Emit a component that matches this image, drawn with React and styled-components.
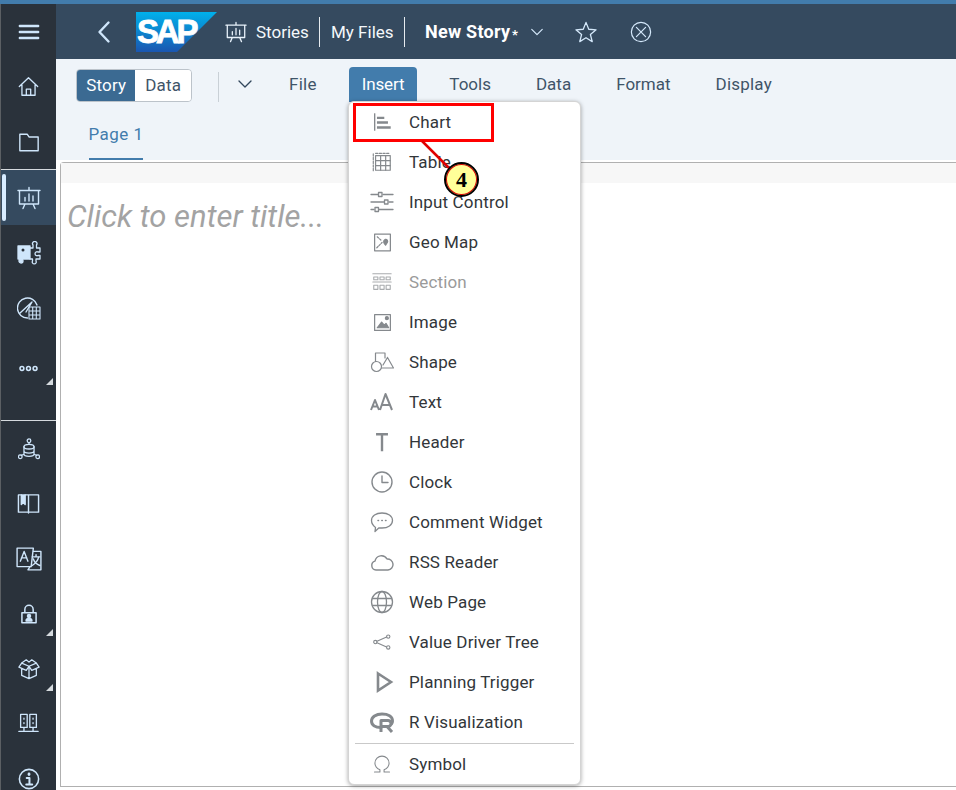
import React from "react";
import styled, { createGlobalStyle } from "styled-components";

const Global = createGlobalStyle`
  html, body { margin: 0; padding: 0; width: 956px; height: 790px; overflow: hidden; background: #fff; }
  * { box-sizing: border-box; }
  body { font-family: Roboto, "Open Sans", Arial, sans-serif; }
`;

const Page = styled.div`
  position: relative; width: 956px; height: 790px; display: flex; flex-direction: column; overflow: hidden;
`;
const TopStrip = styled.div`height: 4px; background: #427cac; flex: none;`;
const Body = styled.div`flex: 1; display: flex; min-height: 0;`;

const Sidebar = styled.nav`
  width: 56px; flex: none; background: #2a323b; border-left: 1px solid #5b5f63; display: flex; flex-direction: column;
  color: #cfe6fb; overflow: hidden;
`;
const Burger = styled.div`height: 55px; flex: none; display: flex; align-items: center; justify-content: center;`;
const Group = styled.div`display: flex; flex: none; flex-direction: column; border-top: ${p => p.$light ? "1px solid #d5dade" : "none"};`;
const SideItem = styled.div`
  position: relative; height: ${p => p.$h || 55}px; flex: none; display: flex; align-items: center; justify-content: center;
  padding-bottom: ${p => p.$pb || 0}px;
  background: ${p => p.$active ? "#354a5f" : "transparent"};
  &::before { content: ""; display: ${p => p.$active ? "block" : "none"}; position: absolute; left: 1px; top: 4px; bottom: 4px; width: 4px; border-radius: 2px; background: #d8ecff; }
  &::after { content: ""; display: ${p => p.$more ? "block" : "none"}; position: absolute; right: 3px; bottom: ${p => p.$bottom ?? 5}px; border-style: solid; border-width: 0 0 7px 7px; border-color: transparent transparent #d5dade transparent; }
`;

const Main = styled.div`flex: 1; display: flex; flex-direction: column; min-width: 0;`;
const Header = styled.header`
  height: 55px; flex: none; background: #354a5f; display: flex; align-items: center; color: #fff; font-size: 17px; padding-left: 37px;
`;
const Back = styled.div`width: 24px; display: flex; margin-right: 19px; color: #cfe6fb;`;
const Logo = styled.svg`width: 81px; height: 40px; margin-right: 8px; flex: none;`;
const HeadIcon = styled.div`display: flex; width: 24px; margin-right: 7px; color: #e8f2fb;`;
const Crumb = styled.span`color: #f4f8fb; width: ${p => p.$w}px; white-space: nowrap;`;
const Sep = styled.div`width: 1px; height: 30px; background: #e6ebef; margin: 0 ${p => p.$r}px 0 ${p => p.$l}px;`;
const StoryName = styled.span`font-weight: 700; font-size: 18px; letter-spacing: .25px; color: #fff; width: 87px; white-space: nowrap;`;
const Star = styled.span`font-size: 13px; font-weight: 700; width: 10px; margin-left: 0; padding-top: 6px; align-self: center;`;
const HeadBtn = styled.div`display: flex; margin-left: ${p => p.$ml}px; color: #d5e9fb;`;

const Toolbar = styled.div`
  height: 101px; flex: none; background: #eff4f9; display: flex; flex-direction: column; padding-left: 20px;
`;
const ToolRow = styled.div`height: 43px; margin-top: 8px; display: flex; align-items: flex-start;`;
const Segment = styled.div`
  margin-top: 2px; display: flex; flex: none; height: 33px; width: 116px; border: 1px solid #bcc3ca; border-radius: 4px; overflow: hidden; font-size: 17px; letter-spacing: .2px;
`;
const SegBtn = styled.div`
  width: ${p => p.$w}px; display: flex; align-items: center; justify-content: center; padding-bottom: 1px;
  background: ${p => p.$on ? "#3b6a92" : "#fff"}; color: ${p => p.$on ? "#fff" : "#3f5468"};
`;
const VLine = styled.div`width: 1px; height: 30px; margin: 5px 18px 0 26px; flex: none; background: #c9d0d6;`;
const Caret = styled.div`display: flex; width: 16px; margin-top: 9px; margin-right: 23px; color: #32475c;`;
const MenuBar = styled.div`display: flex; gap: 19px;`;
const MenuBtn = styled.div`
  height: 35px; padding: 0 13px 1px; display: flex; align-items: center; font-size: 17px; border-radius: 4px 4px 0 0; white-space: nowrap;
  letter-spacing: ${p => p.$ls || 0}px;
  background: ${p => p.$on ? "#427cac" : "transparent"}; color: ${p => p.$on ? "#fff" : "#3f5468"};
`;
const Tabs = styled.div`margin-left: 13px; margin-top: 7px; height: 43px; width: 54px;`;
const Tab = styled.div`
  height: 43px; color: #427cac; font-size: 17px; letter-spacing: .5px; display: flex; align-items: center; justify-content: center; padding-bottom: 7px; white-space: nowrap;
  border-bottom: 2px solid #427cac;
`;
const Canvas = styled.div`
  flex: 1; margin: 2px 0 3px 4px; border: 1px solid #b0b0b0; border-right: none; border-radius: 4px 0 0 0; background: #fff; display: flex; flex-direction: column;
`;
const CanvasHead = styled.div`height: 20px; background: #f7f7f7; flex: none;`;
const Title = styled.div`
  font-size: 31px; font-style: italic; color: #a3a3a3; margin: 16px 0 0 6px; line-height: 36px;
`;

const Menu = styled.div`
  position: absolute; left: 348px; top: 101px; width: 233px; height: 684px; background: #fff; border-radius: 6px;
  border: 1px solid #d4d4d4; box-shadow: 0 1px 4px rgba(0,0,0,.35); display: flex; flex-direction: column; padding-left: 1px;
`;
const Item = styled.div`
  height: 40px; flex: none; display: flex; align-items: center; font-size: 17px; letter-spacing: .15px; color: ${p => p.$off ? "#9a9a9a" : "#32363a"};
`;
const ItemIcon = styled.div`
  width: 24px; height: 24px; margin: 0 15px 0 20px; flex: none; display: flex; align-items: center; justify-content: center; color: #85898d; opacity: ${p => p.$off ? .7 : 1};
`;
const MenuRule = styled.div`height: 1px; background: #c9c9c9; margin: 1px 6px 0 5px; flex: none;`;

const Callout = styled.svg`position: absolute; left: 340px; top: 95px; width: 160px; height: 110px; pointer-events: none;`;
const Badge = styled.div`
  position: absolute; left: 444px; top: 162px; width: 35px; height: 35px; border-radius: 50%; background: #ffff99;
  border: 2px solid #000; box-shadow: 0 0 0 1px #e00000 inset;
  display: flex; align-items: center; justify-content: center; font: 700 22px "Liberation Serif", serif; color: #000;
`;

const S = ({ size = 24, sw = 1.4, children, fill = "none" }) => (
  <svg width={size} height={size} viewBox="0 0 24 24" fill={fill} stroke="currentColor" strokeWidth={sw} strokeLinecap="round" strokeLinejoin="round">{children}</svg>
);

const icons = {
  burger: <S sw={2.600}><path d="M2 5.500h20M2 12h20M2 18.500h20"/></S>,
  home: <S sw={1.5}><path d="M1.500 12 12 2l10.500 10M4.500 10v12h15V10M9.500 22v-7h5v7"/></S>,
  folder: <S sw={1.5}><path d="M2 3.500h8l2 3h10V21.500H2z"/></S>,
  stories: <S sw={1.4}><path d="M1 4.500h22M2.500 4.500V18h19V4.500M12 1.500v3M8 18l-2 4.500M16 18l2 4.500"/><path d="M8 15v-3.500M12 15V8M16 15v-5"/></S>,
  puzzle: <S sw={1.300}><path fill="currentColor" d="M1 5h12v13H1z"/><circle cx="4" cy="20" r="2" fill="currentColor"/><path d="M13 7h3V4a2.200 2.200 0 1 1 3.500 0v3H23v4h-2a2 2 0 1 0 0 3.500h2V18h-4v2a2 2 0 1 1-3.500 0v-2H13"/><circle cx="6" cy="9" r="1.500" fill="#2a323b" stroke="none"/></S>,
  gauge: <S sw={1.400}><path d="M10.500 22A10 10 0 1 1 20 9"/><path d="M2.500 17.500 15 6l-6 10"/><path d="M12 11h11v12H12zM15.700 11v12M19.300 11v12M12 15h11M12 19h11" strokeWidth="1.100"/></S>,
  dots: <S sw={1.800}><circle cx="4.500" cy="12" r="2.200"/><circle cx="12" cy="12" r="2.200"/><circle cx="19.500" cy="12" r="2.200"/></S>,
  network: <S sw={1.400}><circle cx="12" cy="3" r="2"/><path d="M12 5v2"/><ellipse cx="12" cy="9.500" rx="5.500" ry="2.500"/><path d="M6.500 9.500v8c0 1.500 2.500 2.500 5.500 2.500s5.500-1 5.500-2.500v-8M6.500 14c0 1.500 2.500 2.500 5.500 2.500s5.500-1 5.500-2.500M6 18l-2.500 1M18 18l2.500 1"/><circle cx="2.500" cy="20.500" r="2"/><circle cx="21.500" cy="20.500" r="2"/></S>,
  book: <S sw={1.500}><path d="M1.500 3h21v18h-21zM12 3v19"/><path d="M4.500 3v10l2-2 2 2V3" fill="currentColor"/></S>,
  lang: <S sw={1.300}><path d="M1 2h15l-2 17H1zM16 5h7v17H11l2-3"/><path d="M4 14l3.500-9 3.500 9M5 11h5M15 10h7M18.500 8v2M21 10c-1 4-3 6-6 8M16 12c1 3 3 5 6 6"/></S>,
  lock: <S sw={1.800}><path d="M3.500 10.500h17v12h-17zM7 10.500V6.500a5 5 0 0 1 10 0v4"/><circle cx="12" cy="14.500" r="1.800" fill="currentColor"/><path d="M8.500 20.500c0-2 1.500-3 3.500-3s3.500 1 3.500 3z" fill="currentColor"/></S>,
  box: <S sw={1.400}><path d="M12 9 4 5.500 9 2l3 2.500L15 2l5 3.500zM4 5.500 1 10l8 3.500L12 9l3 4.500 8-3.500-3-4.500M4 12v7l8 3.500 8-3.500v-7M12 10v12.500"/></S>,
  servers: <S sw={1.500}><path d="M3 1.500h7.500v15H3zM13.500 1.500H21v15h-7.500zM6.800 16.500V21M17.200 16.500V21M1 21h22"/><path d="M6.800 6v1M6.800 11v1M17.200 6v1M17.200 11v1"/></S>,
  info: <S sw={1.700}><circle cx="12" cy="12" r="10.500"/><path d="M12 6.500v.6" strokeWidth="3"/><path d="M9.500 11H12.500v7M9 18h6.500" strokeWidth="2.200"/></S>,
  chevL: <S sw={2.400}><path d="M15.500 2.500 6.500 12l9 9.500"/></S>,
  chevD: <S sw={2}><path d="M3 7.500l9 9 9-9"/></S>,
  star: <S sw={1.400}><path d="M12 1.500l3 7.500 8 .6-6.200 5.100 2 7.800L12 18.300l-6.800 4.200 2-7.800L1 9.600 9 9z"/></S>,
  close: <S sw={1.300}><circle cx="12" cy="12" r="10.500"/><path d="M7 7l10 10M17 7 7 17"/></S>,
  chart: <S sw={1.500}><path d="M4 2.500v19" strokeLinecap="butt"/><path d="M6.500 7.500h8M6.500 12.500h12M6.500 18h15" strokeWidth="2.600" strokeLinecap="butt"/></S>,
  table: <S sw={1.300}><path d="M5 5h16v16H5z"/><path d="M10.500 5v16M16 5v16M5 10.500h16M5 16h16"/><path d="M2.500 3v18.500M5 2.500h16" strokeDasharray="2.500 1.500"/></S>,
  input: <S sw={1.300}><path d="M1 4.500h7M13 4.500h10M1 12h13M19 12h4M1 19.500h3M9 19.500h14"/><path d="M8.500 2.500h3.500v4H8.500zM14.500 10H18v4h-3.500zM5 17.500h3.500v4H5z"/></S>,
  geo: <S sw={1.400}><path d="M3 2.500h18v19H3z"/><path d="M6 5.500l4.500 4M5.500 18l3-3 3-3" strokeDasharray="2 1.500"/><path d="M15.500 15c-2.500-2.500-3-5-.5-6.500 2.500-.5 3.500 2 2.500 3.500z" fill="currentColor"/></S>,
  section: <S sw={1.200}><path d="M2 3h20M2 12h20M3 6.500h4.500v3H3zM9.800 6.500h4.500v3H9.800zM16.500 6.500H21v3h-4.500zM3 15.500h4.500v4.500H3zM9.800 15.500h4.500v4.500H9.800zM16.500 15.500H21v4.500h-4.500z"/></S>,
  image: <S sw={1.400}><path d="M3 3h18v18H3z"/><path d="M6 18l5-6.500 3 3.500 2-2 3 5z" fill="currentColor"/><circle cx="17" cy="7" r="1.700" fill="currentColor"/></S>,
  shape: <S sw={1.200}><circle cx="6.500" cy="16.500" r="5"/><path d="M5.500 11.500V3H15v5M17.500 7.500 23.500 18H11.500M17.500 7.500 13 15"/></S>,
  text: <S sw={2}><path d="M1 20l4-10 4 10M2.500 16.500h5M10 20 15.500 4 22 20M12 15h8" strokeLinecap="butt"/></S>,
  header: <S sw={2.600}><path d="M5.500 3.500h13M12 3.500V22" strokeLinecap="butt"/></S>,
  clock: <S sw={1.400}><circle cx="12" cy="12" r="10"/><path d="M12 6v6.500h6"/></S>,
  comment: <S sw={1.300}><path d="M12 3c6 0 10.500 3 10.500 7.500S18 18 12 18c-1 0-2 0-3-.2L5 21.500l.5-4C3 15.500 1.500 13 1.500 10.500 1.500 6 6 3 12 3z"/><path d="M8 10.500h.5M11.800 10.500h.5M15.500 10.500h.5" strokeWidth="1.500"/></S>,
  cloud: <S sw={1.400}><path d="M6 20a4.500 4.500 0 0 1-1-8.800A6.500 6.500 0 0 1 17 9a5.500 5.500 0 0 1 1 11z"/></S>,
  web: <S sw={1.300}><circle cx="12" cy="12" r="10.500"/><ellipse cx="12" cy="12" rx="4.500" ry="10.500"/><path d="M2.500 8.500h19M2.500 15.500h19"/></S>,
  tree: <S sw={1.300}><circle cx="4" cy="12" r="2"/><circle cx="19.500" cy="5.500" r="2"/><circle cx="19.500" cy="18.500" r="2"/><path d="M6 11 17.500 6M6 13 17.500 18"/></S>,
  play: <S sw={2.600}><path d="M8 3.500 21 12 8 20.500z" strokeLinejoin="miter"/></S>,
  r: <S sw={3}><path d="M11 17.500C5 17.500 1.500 15 1.500 11S6 4 12 4s10.500 2.500 10.500 7c0 1-.3 2-1 3"/><path d="M11 22V10.500h7a3 3 0 0 1 0 6h-7M17 16.500l5 5.500" strokeLinecap="butt"/></S>,
  omega: <S sw={1.300}><path d="M3 21.500h6.500V19C5.500 17 3.500 14 3.500 11a8.500 8.500 0 0 1 17 0c0 3-2 6-6 8v2.500H21"/></S>,
};

const sizeOf = { burger: 22, chart: 22, table: 22, input: 24, geo: 21, section: 22, image: 21, shape: 26, text: 24, header: 22, clock: 24, comment: 24, cloud: 24, web: 24, tree: 20, play: 24, r: 26, omega: 20, home: 21, folder: 22, stories: 24, puzzle: 24, gauge: 24, dots: 21, network: 22, book: 23, lang: 26, lock: 20, box: 22, servers: 21, info: 22, chevL: 24 };
const Ico = ({ n, size }) => React.cloneElement(icons[n], { size: size || sizeOf[n] || 22 });

const menu = [
  ["chart", "Chart"], ["table", "Table"], ["input", "Input Control"], ["geo", "Geo Map"], ["section", "Section", true],
  ["image", "Image"], ["shape", "Shape"], ["text", "Text"], ["header", "Header"], ["clock", "Clock"],
  ["comment", "Comment Widget"], ["cloud", "RSS Reader"], ["web", "Web Page"], ["tree", "Value Driver Tree"],
  ["play", "Planning Trigger"], ["r", "R Visualization"],
];

export default function App() {
  return (
    <Page>
      <Global />
      <TopStrip />
      <Body>
        <Sidebar>
          <Burger><Ico n="burger" /></Burger>
          <Group>
            <SideItem><Ico n="home" /></SideItem>
            <SideItem><Ico n="folder" /></SideItem>
          </Group>
          <Group $light>
            <SideItem $active><Ico n="stories" /></SideItem>
            <SideItem><Ico n="puzzle" /></SideItem>
            <SideItem><Ico n="gauge" /></SideItem>
            <SideItem $more $h={85} $pb={19} $bottom={35}><Ico n="dots" /></SideItem>
          </Group>
          <Group $light>
            <SideItem><Ico n="network" /></SideItem>
            <SideItem><Ico n="book" /></SideItem>
            <SideItem><Ico n="lang" /></SideItem>
            <SideItem $more><Ico n="lock" /></SideItem>
            <SideItem $more><Ico n="box" /></SideItem>
            <SideItem><Ico n="servers" /></SideItem>
            <SideItem><Ico n="info" /></SideItem>
          </Group>
        </Sidebar>
        <Main>
          <Header>
            <Back><Ico n="chevL" /></Back>
            <Logo viewBox="0 0 81 40">
              <defs>
                <linearGradient id="sapg" x1="0" y1="0" x2="0" y2="1">
                  <stop offset="0" stopColor="#00b1eb" />
                  <stop offset="1" stopColor="#1a56b0" />
                </linearGradient>
              </defs>
              <polygon points="0,0 81,0 41,40 0,40" fill="url(#sapg)" />
              <text x="1" y="31" fontFamily="'Liberation Sans', Arial, sans-serif" fontWeight="700" fontSize="33" fill="#fff" stroke="#fff" strokeWidth=".8" letterSpacing="-3.2">SAP</text>
            </Logo>
            <HeadIcon><Ico n="stories" size={22} /></HeadIcon>
            <Crumb $w={54}>Stories</Crumb>
            <Sep $l={9} $r={11} />
            <Crumb $w={63}>My Files</Crumb>
            <Sep $l={10} $r={20} />
            <StoryName>New Story</StoryName>
            <Star>*</Star>
            <HeadBtn $ml={8}><Ico n="chevD" size={14} /></HeadBtn>
            <HeadBtn $ml={31}><Ico n="star" size={22} /></HeadBtn>
            <HeadBtn $ml={33}><Ico n="close" size={22} /></HeadBtn>
          </Header>
          <Toolbar>
            <ToolRow>
              <Segment>
                <SegBtn $on $w={59}>Story</SegBtn>
                <SegBtn $w={56}>Data</SegBtn>
              </Segment>
              <VLine />
              <Caret><Ico n="chevD" size={16} /></Caret>
              <MenuBar>
                <MenuBtn $ls={0.25}>File</MenuBtn>
                <MenuBtn $on $ls={-0.15}>Insert</MenuBtn>
                <MenuBtn>Tools</MenuBtn>
                <MenuBtn>Data</MenuBtn>
                <MenuBtn>Format</MenuBtn>
                <MenuBtn $ls={0.2}>Display</MenuBtn>
              </MenuBar>
            </ToolRow>
            <Tabs><Tab>Page 1</Tab></Tabs>
          </Toolbar>
          <Canvas>
            <CanvasHead />
            <Title>Click to enter title...</Title>
          </Canvas>
        </Main>
      </Body>
      <Menu>
        {menu.map(([ic, label, off]) => (
          <Item key={label} $off={off}>
            <ItemIcon $off={off}><Ico n={ic} /></ItemIcon>
            {label}
          </Item>
        ))}
        <MenuRule />
        <Item>
          <ItemIcon><Ico n="omega" /></ItemIcon>
          Symbol
        </Item>
      </Menu>
      <Callout viewBox="0 0 160 110">
        <rect x="14.500" y="9.500" width="138" height="36" fill="none" stroke="#ff0000" strokeWidth="3" />
        <line x1="82" y1="46" x2="112" y2="76" stroke="#e00000" strokeWidth="2.500" />
      </Callout>
      <Badge>4</Badge>
    </Page>
  );
}
